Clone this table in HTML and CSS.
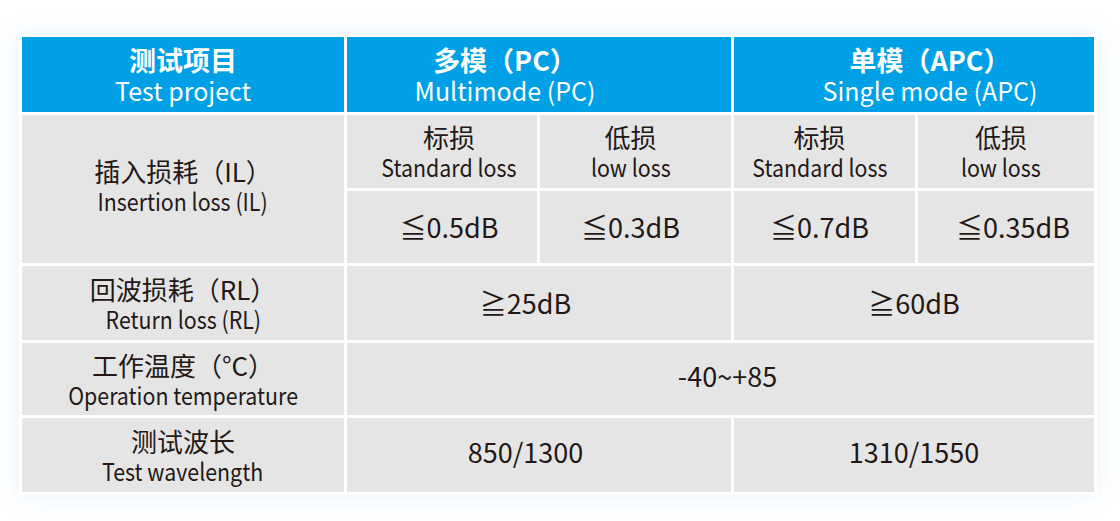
FILE: index.html
```html
<!DOCTYPE html>
<html lang="zh">
<head>
<meta charset="utf-8">
<title>测试项目</title>
<link rel="stylesheet" href="styles.css">
</head>
<body>
<div class="page">
  <div class="card">
    <div class="spec">
      <div class="cell head"><span class="zh">测试项目</span><span class="en">Test project</span></div>
      <div class="cell head span2 nudge-l3"><span class="zh">多模（PC）</span><span class="en">Multimode (PC)</span></div>
      <div class="cell head span2 nudge-r2"><span class="zh">单模（APC）</span><span class="en">Single mode (APC)</span></div>

      <div class="cell label rows2"><span class="zh">插入损耗（IL）</span><span class="en">Insertion loss (IL)</span></div>
      <div class="cell nudge-r1"><span class="zh">标损</span><span class="en">Standard loss</span></div>
      <div class="cell nudge-l1"><span class="zh">低损</span><span class="en">low loss</span></div>
      <div class="cell nudge-l1"><span class="zh">标损</span><span class="en">Standard loss</span></div>
      <div class="cell nudge-l1"><span class="zh">低损</span><span class="en">low loss</span></div>
      <div class="cell val nudge-r1">≦0.5dB</div>
      <div class="cell val nudge-l1">≦0.3dB</div>
      <div class="cell val nudge-l1">≦0.7dB</div>
      <div class="cell val nudge-r1">≦0.35dB</div>

      <div class="cell label"><span class="zh">回波损耗（RL）</span><span class="en">Return loss (RL)</span></div>
      <div class="cell val span2 nudge-l2">≧25dB</div>
      <div class="cell val span2">≧60dB</div>

      <div class="cell label"><span class="zh">工作温度（°C）</span><span class="en">Operation temperature</span></div>
      <div class="cell val span4 nudge-r1 lift">-40~+85</div>

      <div class="cell label"><span class="zh">测试波长</span><span class="en">Test wavelength</span></div>
      <div class="cell val span2 nudge-l2 lift">850/1300</div>
      <div class="cell val span2 lift">1310/1550</div>
    </div>
  </div>
</div>
</body>
</html>
```

FILE: styles.css
```css
html, body {
  margin: 0;
  padding: 0;
  background: #ffffff;
}
body {
  width: 1120px;
  height: 521px;
  overflow: hidden;
  font-family: "Noto Sans CJK SC", "Noto Sans", sans-serif;
  color: #231815;
}
.page {
  padding: 34px 0 0 19px;
}
.card {
  width: 1078px;
  padding: 3px;
  box-sizing: border-box;
  background: #ffffff;
  box-shadow: 0 0 24px rgba(60, 150, 220, 0.12);
}
.spec {
  display: grid;
  grid-template-columns: 322px 190px 191px 181px 176px;
  grid-template-rows: 75px 73px 72px 74px 72px 74px;
  gap: 3px;
}
.cell {
  background: #e5e5e5;
  display: flex;
  flex-direction: column;
  align-items: center;
  justify-content: center;
  text-align: center;
  line-height: 30px;
  box-sizing: border-box;
}
.cell .zh {
  font-size: 26px;
}
.cell .en {
  display: inline-block;
  font-size: 24px;
  white-space: nowrap;
  transform: scaleX(0.89);
}
.head {
  background: #00a0e6;
  color: #ffffff;
}
.head .zh {
  font-weight: 700;
  font-size: 27px;
}
.head .en {
  font-size: 25px;
  transform: none;
}
.label {
  padding-top: 2px;
}
.label.rows2 {
  padding-top: 0;
  padding-bottom: 6px;
}
.val {
  font-size: 27px;
}
.lift {
  padding-bottom: 6px;
}
.span2 { grid-column: span 2; }
.span4 { grid-column: span 4; }
.rows2 { grid-row: span 2; }

.nudge-l3 { padding-right: 68px; }
.nudge-r2 { padding-left: 32px; }
.nudge-l2 { padding-right: 27px; }
.nudge-r1 { padding-left: 14px; }
.nudge-l1 { padding-right: 10px; }
```
